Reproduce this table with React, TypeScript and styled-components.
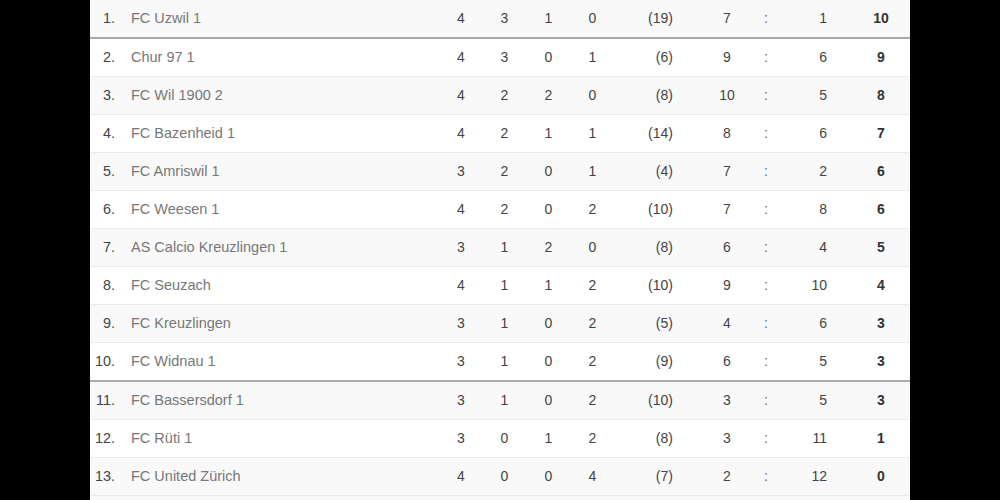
import React from "react";
import styled, { createGlobalStyle } from "styled-components";

const Global = createGlobalStyle`
  html, body {
    margin: 0;
    padding: 0;
    background: #000;
    overflow: hidden;
  }
  body {
    font-family: "Liberation Sans", Arial, sans-serif;
  }
`;

const Page = styled.div`
  display: flex;
  justify-content: center;
  width: 1000px;
`;

const Panel = styled.div`
  width: 820px;
  background: #fff;
`;

const Table = styled.table`
  width: 820px;
  table-layout: fixed;
  border-collapse: separate;
  border-spacing: 0;
  font-size: 14px;
  color: #444;
`;

const Row = styled.tr<{ $odd: boolean; $divider: boolean }>`
  background: ${(p) => (p.$odd ? "#f9f9f9" : "#fff")};
  & > td {
    border-bottom: ${(p) => (p.$divider ? "2px solid #a9a9a9" : "1px solid #e9e9e9")};
  }
`;

const Cell = styled.td<{ $align?: "left" | "center" | "right"; $pr?: number; $pl?: number }>`
  padding: 0 ${(p) => p.$pr ?? 0}px 0 ${(p) => p.$pl ?? 0}px;
  line-height: 37px;
  text-align: ${(p) => p.$align ?? "center"};
  white-space: nowrap;
  overflow: hidden;
`;

const Rank = styled(Cell)`
  color: #444;
  font-size: 14.4px;
`;

const Name = styled(Cell)`
  color: #777;
  font-size: 14.5px;
`;

const Points = styled(Cell)`
  font-weight: bold;
  color: #333;
`;

const Colon = styled(Cell)`
  color: #666;
`;

const Tail = styled.div`
  height: 10px;
  background: #f9f9f9;
`;

type Team = {
  rank: number;
  name: string;
  p: number;
  w: number;
  d: number;
  l: number;
  diff: number;
  gf: number;
  ga: number;
  pts: number;
};

const teams: Team[] = [
  { rank: 1, name: "FC Uzwil 1", p: 4, w: 3, d: 1, l: 0, diff: 19, gf: 7, ga: 1, pts: 10 },
  { rank: 2, name: "Chur 97 1", p: 4, w: 3, d: 0, l: 1, diff: 6, gf: 9, ga: 6, pts: 9 },
  { rank: 3, name: "FC Wil 1900 2", p: 4, w: 2, d: 2, l: 0, diff: 8, gf: 10, ga: 5, pts: 8 },
  { rank: 4, name: "FC Bazenheid 1", p: 4, w: 2, d: 1, l: 1, diff: 14, gf: 8, ga: 6, pts: 7 },
  { rank: 5, name: "FC Amriswil 1", p: 3, w: 2, d: 0, l: 1, diff: 4, gf: 7, ga: 2, pts: 6 },
  { rank: 6, name: "FC Weesen 1", p: 4, w: 2, d: 0, l: 2, diff: 10, gf: 7, ga: 8, pts: 6 },
  { rank: 7, name: "AS Calcio Kreuzlingen 1", p: 3, w: 1, d: 2, l: 0, diff: 8, gf: 6, ga: 4, pts: 5 },
  { rank: 8, name: "FC Seuzach", p: 4, w: 1, d: 1, l: 2, diff: 10, gf: 9, ga: 10, pts: 4 },
  { rank: 9, name: "FC Kreuzlingen", p: 3, w: 1, d: 0, l: 2, diff: 5, gf: 4, ga: 6, pts: 3 },
  { rank: 10, name: "FC Widnau 1", p: 3, w: 1, d: 0, l: 2, diff: 9, gf: 6, ga: 5, pts: 3 },
  { rank: 11, name: "FC Bassersdorf 1", p: 3, w: 1, d: 0, l: 2, diff: 10, gf: 3, ga: 5, pts: 3 },
  { rank: 12, name: "FC Rüti 1", p: 3, w: 0, d: 1, l: 2, diff: 8, gf: 3, ga: 11, pts: 1 },
  { rank: 13, name: "FC United Zürich", p: 4, w: 0, d: 0, l: 4, diff: 7, gf: 2, ga: 12, pts: 0 },
];

const widths = [30, 320, 42, 45, 43, 45, 85, 54, 24, 74, 58];

export default function App() {
  return (
    <>
      <Global />
      <Page>
        <Panel>
          <Table>
            <colgroup>
              {widths.map((w, i) => (
                <col key={i} style={{ width: w }} />
              ))}
            </colgroup>
            <tbody>
              {teams.map((t) => (
                <Row key={t.rank} $odd={t.rank % 2 === 1} $divider={t.rank === 1 || t.rank === 10}>
                  <Rank $align="right" $pr={5}>{t.rank}.</Rank>
                  <Name $align="left" $pl={11}>{t.name}</Name>
                  <Cell>{t.p}</Cell>
                  <Cell>{t.w}</Cell>
                  <Cell>{t.d}</Cell>
                  <Cell>{t.l}</Cell>
                  <Cell $align="right" $pr={27}>({t.diff})</Cell>
                  <Cell>{t.gf}</Cell>
                  <Colon>:</Colon>
                  <Cell $align="right" $pr={25}>{t.ga}</Cell>
                  <Points>{t.pts}</Points>
                </Row>
              ))}
            </tbody>
          </Table>
          <Tail />
        </Panel>
      </Page>
    </>
  );
}
